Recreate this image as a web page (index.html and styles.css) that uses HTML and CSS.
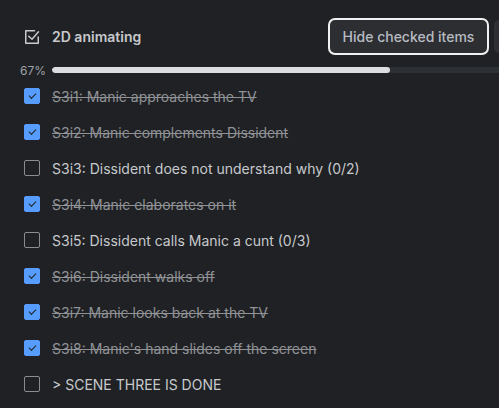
FILE: index.html
```html
<!DOCTYPE html>
<html>
<head>
<meta charset="utf-8">
<link rel="stylesheet" href="styles.css">
</head>
<body>
<div class="checklist">
  <div class="header">
    <svg class="head-icon" width="16" height="16" viewBox="0 0 16 16" fill="none" stroke="currentColor" stroke-width="1.5" stroke-linecap="round" stroke-linejoin="round">
      <path d="M10.5 1.75H1.75V14.25H14.25V8"/>
      <path d="M4.75 7.25L8 10.25L14.5 2.75"/>
    </svg>
    <h2 class="title">2D animating</h2>
    <div class="actions">
      <button class="btn btn-focus">Hide checked items</button>
      <button class="btn btn-next" aria-label="Delete"></button>
    </div>
  </div>
  <div class="progress">
    <span class="pct">67%</span>
    <div class="track"><div class="fill" style="width:67%"></div></div>
  </div>
  <ul class="items">
    <li class="item done"><span class="box"></span><span class="label">S3i1: Manic approaches the TV</span></li>
    <li class="item done"><span class="box"></span><span class="label">S3i2: Manic complements Dissident</span></li>
    <li class="item"><span class="box"></span><span class="label">S3i3: Dissident does not understand why (0/2)</span></li>
    <li class="item done"><span class="box"></span><span class="label">S3i4: Manic elaborates on it</span></li>
    <li class="item"><span class="box"></span><span class="label">S3i5: Dissident calls Manic a cunt (0/3)</span></li>
    <li class="item done"><span class="box"></span><span class="label">S3i6: Dissident walks off</span></li>
    <li class="item done"><span class="box"></span><span class="label">S3i7: Manic looks back at the TV</span></li>
    <li class="item done"><span class="box"></span><span class="label">S3i8: Manic's hand slides off the screen</span></li>
    <li class="item"><span class="box"></span><span class="label">&gt; SCENE THREE IS DONE</span></li>
  </ul>
</div>
</body>
</html>
```
FILE: styles.css
```css
html, body {
  margin: 0;
  padding: 0;
  background: #1f2124;
  overflow: hidden;
}
body {
  width: 499px;
  height: 408px;
  font-family: Inter, "Noto Sans", sans-serif;
  font-size: 14px;
  color: #c7c9cc;
}
.checklist {
  width: 560px;
}
.header {
  display: flex;
  align-items: center;
  height: 37px;
  margin-top: 18px;
  padding-left: 24px;
}
.head-icon {
  color: #c7c9cc;
  flex: none;
}
.title {
  margin: 0 0 0 12px;
  font-size: 14px;
  font-weight: 600;
  color: #c7c9cc;
}
.actions {
  margin-left: auto;
  display: flex;
  gap: 5px;
  height: 37px;
}
.btn {
  font-family: inherit;
  font-size: 14px;
  font-weight: 500;
  color: #b8bcc2;
  background: #2c2e32;
  border: none;
  border-radius: 5px;
  padding: 0;
  height: 37px;
}
.btn-focus {
  width: 161px;
  border: 2px solid #f1f1f1;
  border-radius: 7px;
}
.btn-next {
  width: 66px;
  margin-top: 2px;
  height: 33px;
  background: #2e3034;
}
.progress {
  display: flex;
  align-items: center;
  height: 16px;
  margin-top: 7px;
  padding-left: 20px;
  padding-right: 4px;
}
.pct {
  width: 23px;
  font-size: 12px;
  color: #9ea2a8;
  margin-right: 9px;
  white-space: nowrap;
}
.track {
  flex: 1;
  height: 6px;
  border-radius: 3px;
  background: #2d3034;
  overflow: hidden;
}
.fill {
  height: 100%;
  border-radius: 3px;
  background: #dcdde0;
}
.items {
  list-style: none;
  margin: 0;
  padding: 0;
}
.item {
  display: flex;
  align-items: center;
  height: 36px;
  padding-left: 24px;
  gap: 12px;
}
.box {
  box-sizing: border-box;
  width: 16px;
  height: 16px;
  border: 1px solid #8a8c90;
  border-radius: 2px;
  flex: none;
  position: relative;
}
.done .box {
  background: #579dff;
  border-color: #579dff;
}
.done .box::after {
  content: "";
  position: absolute;
  left: 4px;
  top: 4px;
  width: 6px;
  height: 3px;
  border-left: 1.5px solid #1d2125;
  border-bottom: 1.5px solid #1d2125;
  transform: rotate(-45deg);
}
.label {
  white-space: nowrap;
}
.done .label {
  color: #909296;
  text-decoration: line-through;
}
```
